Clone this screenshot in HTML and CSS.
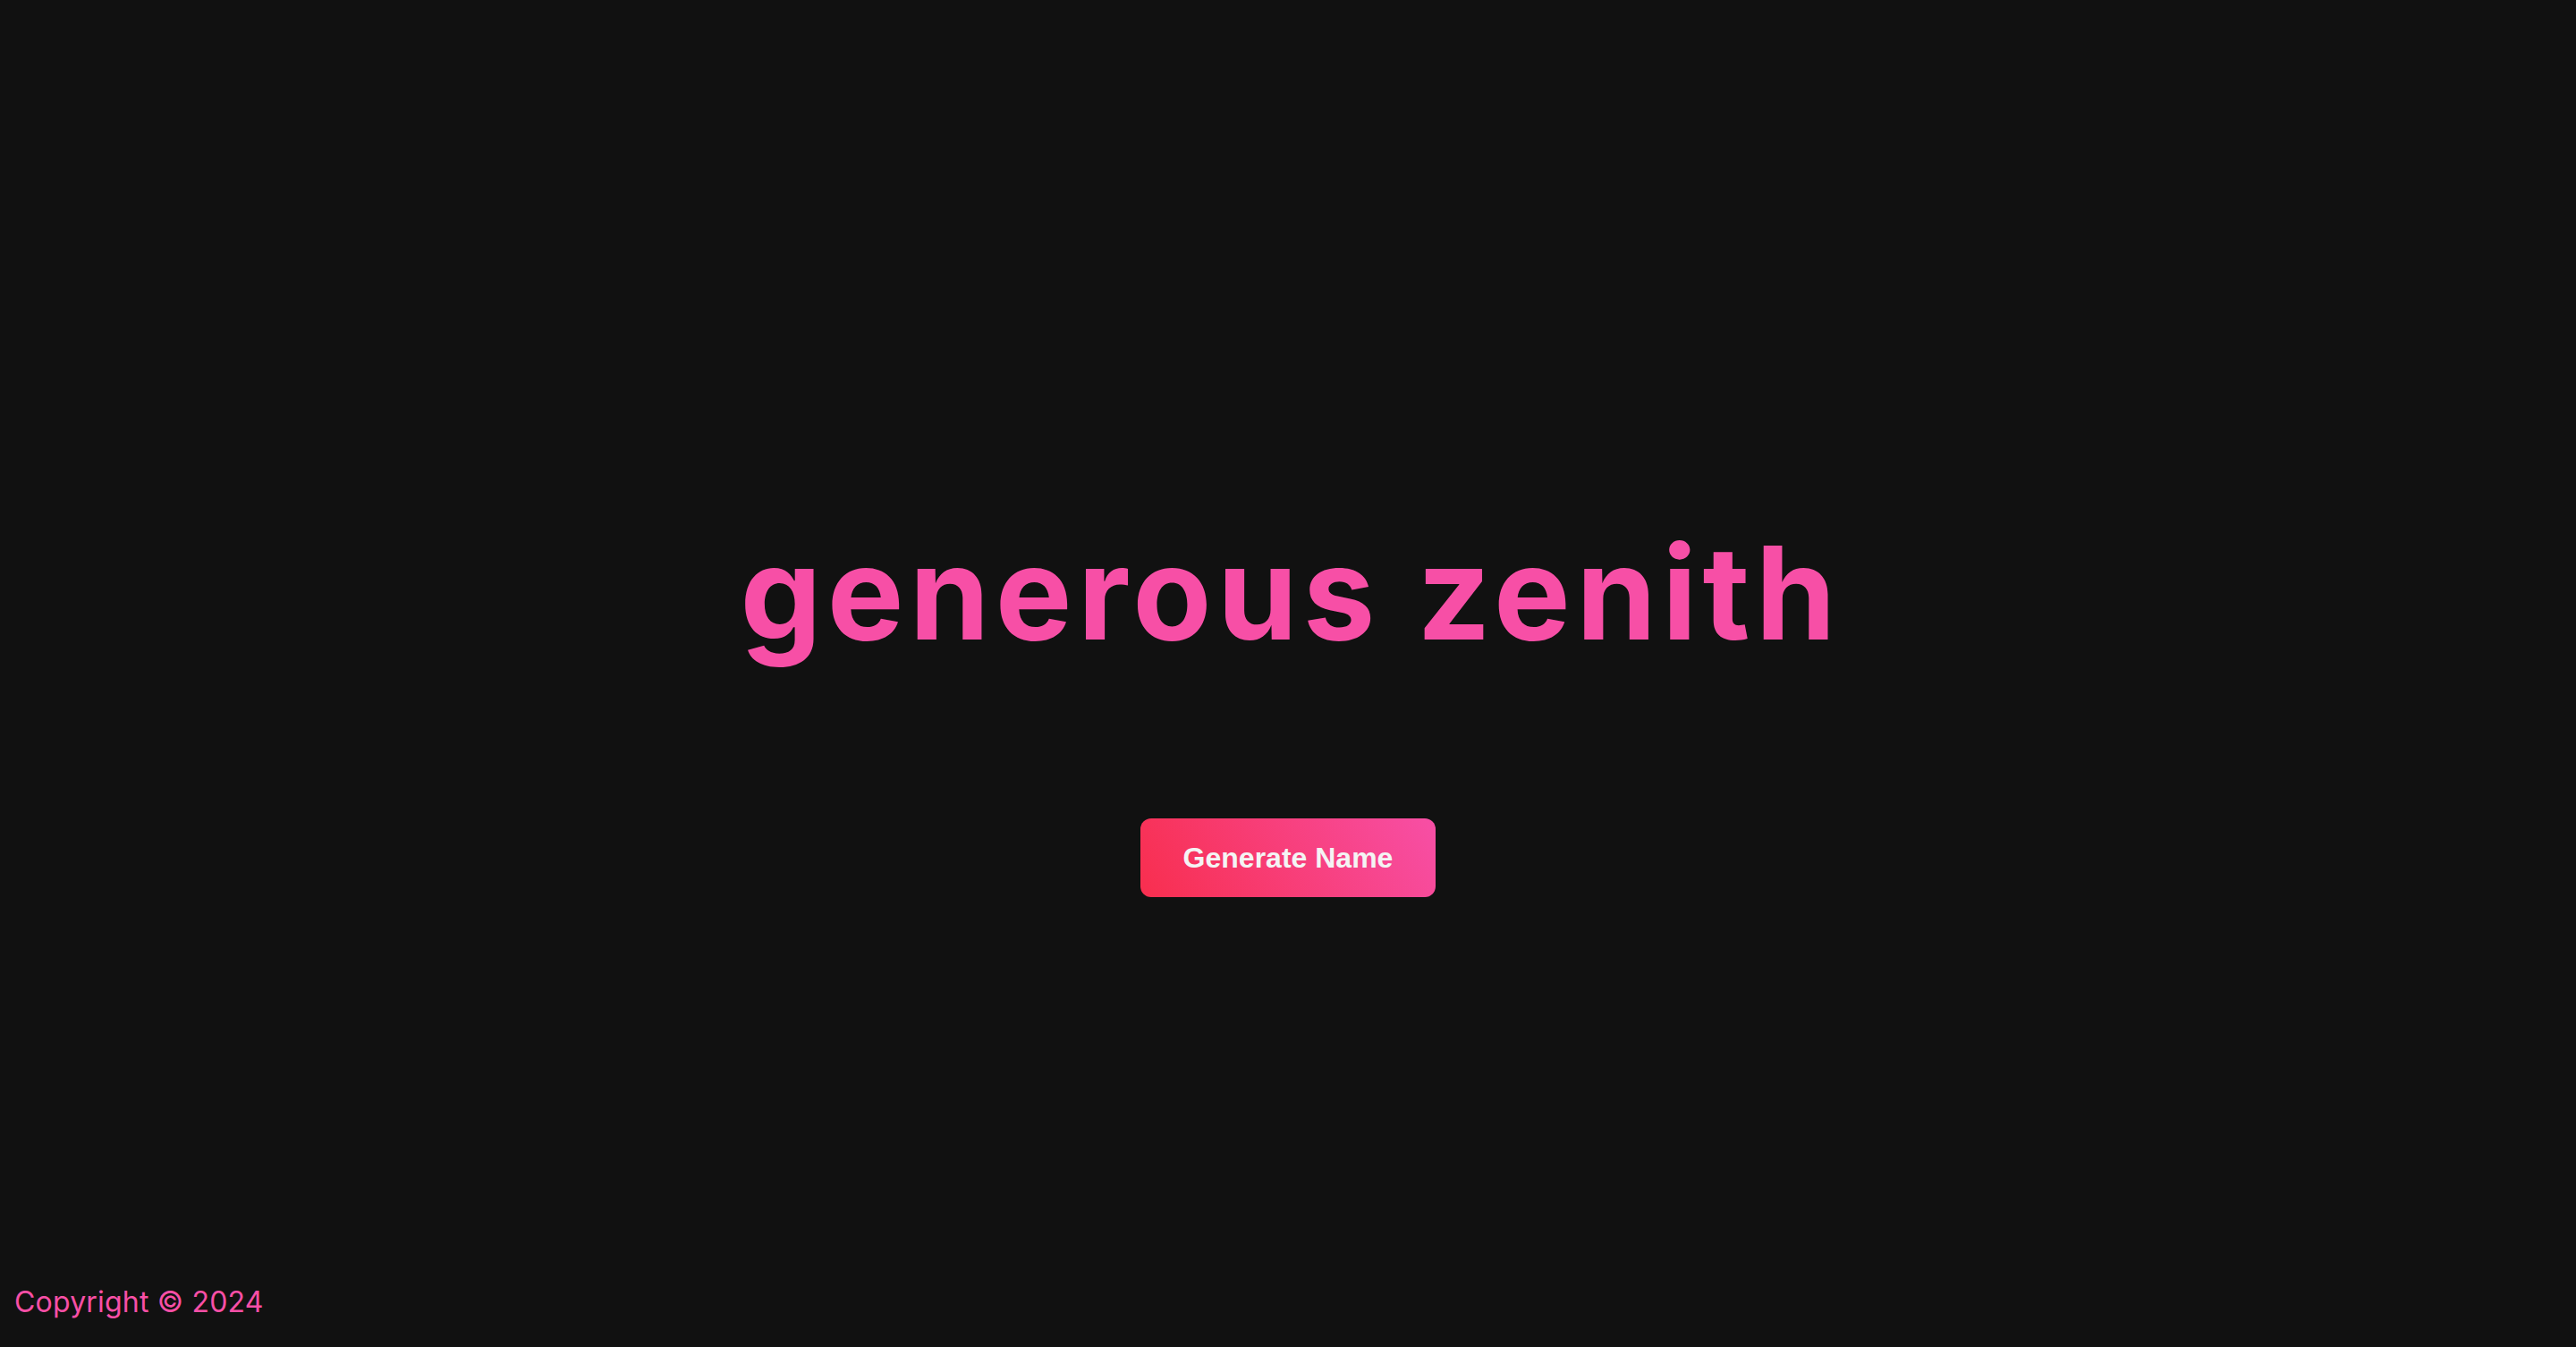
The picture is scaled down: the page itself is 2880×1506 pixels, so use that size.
FILE: index.html
```html
<!DOCTYPE html>
<html lang="en">
<head>
<meta charset="utf-8">
<title>Name Generator</title>
<link rel="stylesheet" href="styles.css">
</head>
<body>
<main class="stage">
  <h1 class="name">generous zenith</h1>
  <button class="generate" type="button">Generate Name</button>
</main>
<footer class="footer">Copyright © 2024</footer>
</body>
</html>
```
FILE: styles.css
```css
html, body {
  margin: 0;
  padding: 0;
}
body {
  background: #111111;
  height: 100vh;
  display: flex;
  flex-direction: column;
  font-family: Inter, "Liberation Sans", sans-serif;
}
.stage {
  flex: 1;
  display: flex;
  flex-direction: column;
  align-items: center;
  justify-content: center;
  padding-top: 158px;
}
.name {
  margin: 0;
  font-family: Inter, "DejaVu Sans", sans-serif;
  font-weight: 700;
  font-size: 144px;
  line-height: 1;
  color: #f74fa6;
  letter-spacing: 6.3px;
  text-indent: 6.3px;
}
.generate {
  margin-top: 180px;
  padding: 25.6px 48px;
  border: 0;
  border-radius: 12px;
  background: linear-gradient(60deg, #f82e4e 0%, #f74fa6 100%);
  color: #f4f4f4;
  font-family: "Liberation Sans", Arial, sans-serif;
  font-weight: 700;
  font-size: 32px;
  line-height: normal;
  cursor: pointer;
}
.footer {
  padding: 0 16px 31px;
  color: #f74fa6;
  font-family: Inter, sans-serif;
  font-size: 32px;
  letter-spacing: 0.2px;
}
```
